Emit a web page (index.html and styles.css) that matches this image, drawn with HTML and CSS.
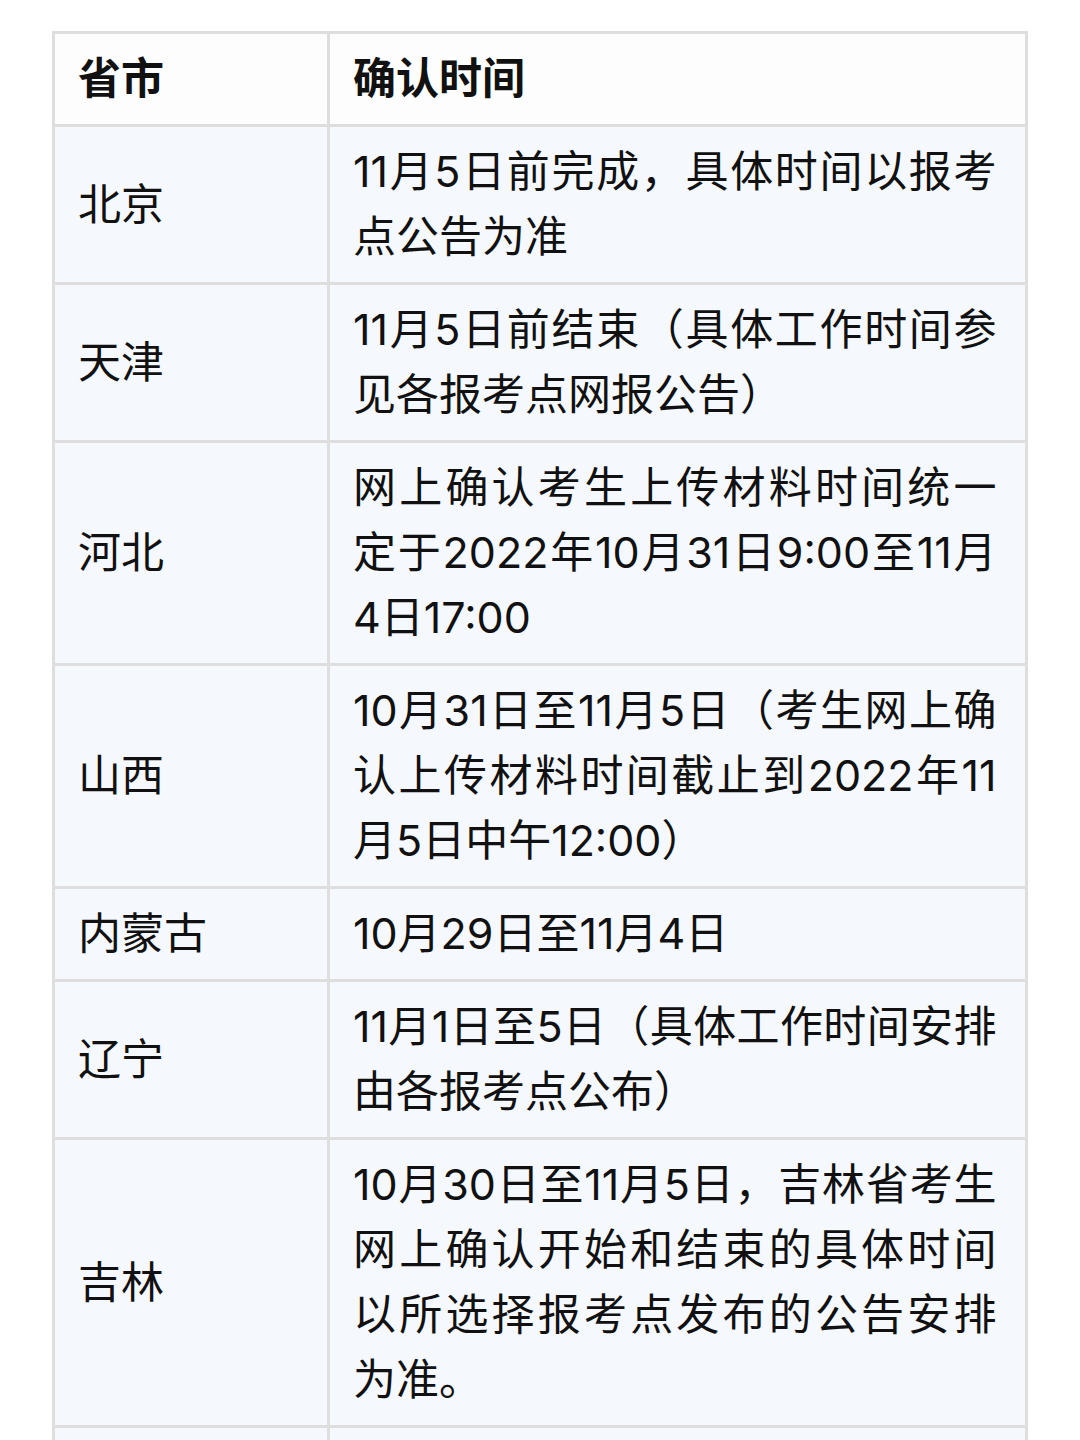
FILE: index.html
```html
<!DOCTYPE html>
<html lang="zh-CN">
<head>
<meta charset="utf-8">
<link rel="stylesheet" href="styles.css">
</head>
<body>
<table class="tbl">
  <colgroup><col class="c1"><col class="c2"></colgroup>
  <thead>
    <tr><th>省市</th><th>确认时间</th></tr>
  </thead>
  <tbody>
    <tr><td>北京</td><td>11月5日前完成，具体时间以报考点公告为准</td></tr>
    <tr><td>天津</td><td>11月5日前结束（具体工作时间参见各报考点网报公告）</td></tr>
    <tr><td>河北</td><td>网上确认考生上传材料时间统一定于2022年10月31日9:00至11月4日17:00</td></tr>
    <tr><td>山西</td><td>10月31日至11月5日（考生网上确认上传材料时间截止到2022年11月5日中午12:00）</td></tr>
    <tr><td>内蒙古</td><td>10月29日至11月4日</td></tr>
    <tr><td>辽宁</td><td>11月1日至5日（具体工作时间安排由各报考点公布）</td></tr>
    <tr><td>吉林</td><td>10月30日至11月5日，吉林省考生网上确认开始和结束的具体时间以所选择报考点发布的公告安排为准。</td></tr>
    <tr class="tail"><td>&nbsp;</td><td>&nbsp;</td></tr>
  </tbody>
</table>
</body>
</html>
```
FILE: styles.css
```css
html, body {
  margin: 0;
  padding: 0;
  background: #ffffff;
}
body {
  padding: 31px 0 0 52px;
  font-family: Inter, "Noto Sans CJK SC", sans-serif;
  color: #111111;
}
.tbl {
  width: 976px;
  table-layout: fixed;
  border-collapse: collapse;
  font-size: 43px;
  line-height: 65px;
}
.c1 { width: 275px; }
.tbl th, .tbl td {
  border: 3px solid #dedede;
  padding: 12px 28.5px 13px 23px;
  text-align: justify;
  vertical-align: middle;
}
.tbl th {
  background: #fdfdfd;
  font-weight: 700;
}
.tbl td {
  background: #f5f8fd;
  font-weight: 400;
}
.tbl th:first-child, .tbl td:first-child {
  padding-left: 23px;
  padding-right: 20px;
}
```
